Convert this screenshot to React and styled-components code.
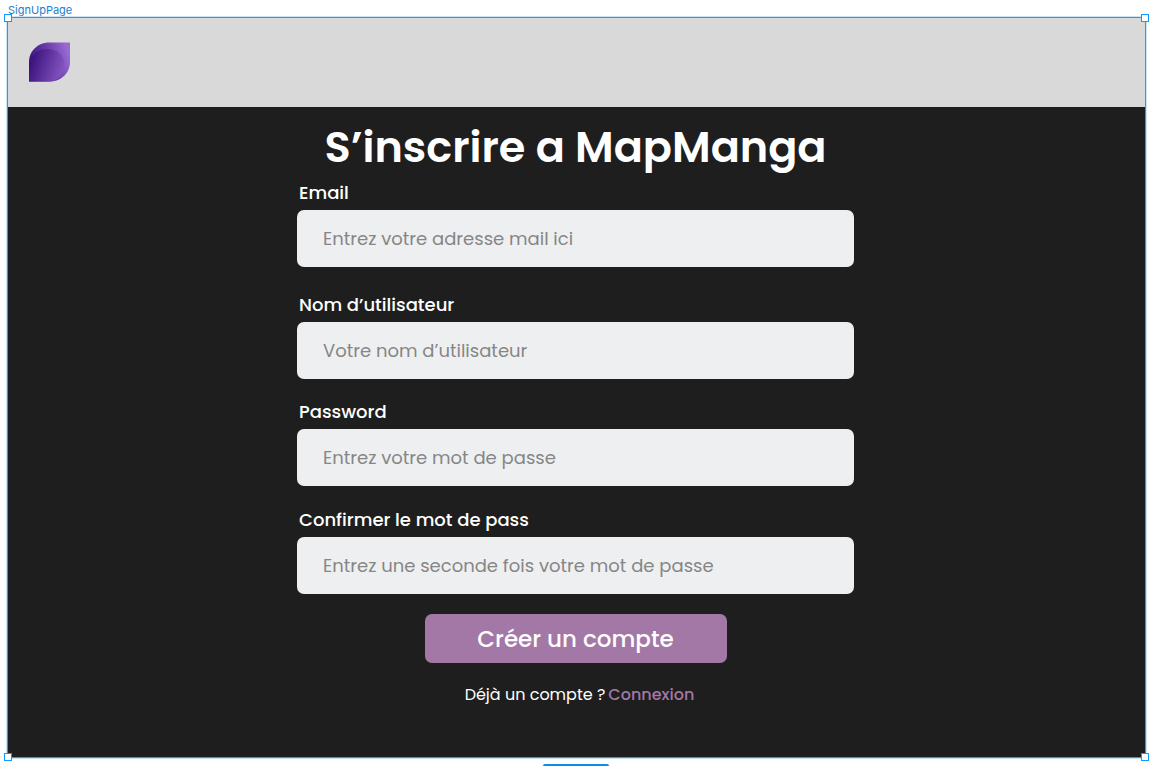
import React from "react";
import styled, { createGlobalStyle } from "styled-components";

const GlobalStyle = createGlobalStyle`
  *, *::before, *::after { box-sizing: border-box; }
  body {
    margin: 0;
    background: #ffffff;
    font-family: Poppins, Inter, "Liberation Sans", sans-serif;
  }
`;

const Canvas = styled.div`
  position: relative;
  min-height: 100vh;
  padding: 3px 5px 8px 7px;
  display: flex;
  flex-direction: column;
  overflow: hidden;
`;

const FrameLabel = styled.div`
  font: 400 11px/14px Inter, "Liberation Sans", sans-serif;
  color: #1c7ed0;
  padding-left: 1px;
`;

const Frame = styled.main`
  position: relative;
  flex: 1;
  border: 1px solid #2f97e4;
  box-shadow: 0 0 0 1px rgba(47, 151, 228, 0.25);
  background: #1e1e1e;
`;

const Handle = styled.span`
  position: absolute;
  width: 8px;
  height: 8px;
  border: 1px solid #0d99ff;
  background: #ffffff;
  ${(p) => p.$v}: -4px;
  ${(p) => p.$h}: -4px;
`;

const SizeTag = styled.span`
  position: absolute;
  left: 50%;
  bottom: 0;
  width: 66px;
  height: 2px;
  margin-left: -33px;
  border-radius: 2px 2px 0 0;
  background: #0d8bea;
`;

const Header = styled.header`
  height: 89px;
  padding: 24px 20px;
  background: #d9d9d9;
`;

const LogoLink = styled.a`
  display: block;
  width: 43px;
`;

const LogoSvg = styled.svg`
  display: block;
`;

const Form = styled.form`
  width: 100%;
  max-width: 559px;
  margin: 0 auto;
  padding: 8px 2px 48px 0;
  display: flex;
  flex-direction: column;
  align-items: center;
`;

const Title = styled.h1`
  margin: 0 0 1px;
  font-size: 43px;
  line-height: 64px;
  font-weight: 600;
  color: #ffffff;
  white-space: nowrap;
`;

const Field = styled.div`
  width: 100%;
  display: flex;
  flex-direction: column;
  margin-bottom: ${(p) => p.$space}px;
`;

const Label = styled.label`
  padding: 0 2px 4px;
  font-size: 18px;
  line-height: 26px;
  font-weight: 500;
  color: #ffffff;
`;

const Input = styled.input`
  width: 100%;
  height: 57px;
  padding: 0 26px;
  border: 0;
  border-radius: 7px;
  background: #eeeff1;
  font: 400 18px/26px Poppins, Inter, "Liberation Sans", sans-serif;
  color: #1e1e1e;
  &::placeholder { color: #868686; opacity: 1; }
`;

const SubmitButton = styled.button`
  width: 302px;
  height: 49px;
  border: 0;
  border-radius: 7px;
  background: #a378a6;
  color: #ffffff;
  font: 500 23px/32px Poppins, Inter, "Liberation Sans", sans-serif;
`;

const Footnote = styled.p`
  margin: 0;
  padding: 20px 0 0 8px;
  display: flex;
  gap: 3px;
  font-size: 16px;
  line-height: 24px;
  color: #ffffff;
`;

const LoginLink = styled.a`
  color: #a378a6;
  font-weight: 500;
  text-decoration: none;
`;

const Logo = () => (
  <LogoSvg width="43" height="41" viewBox="0 0 43 41" aria-hidden="true">
    <defs>
      <linearGradient id="leaf" x1="0" y1="0.7" x2="1" y2="0.4">
        <stop offset="0" stopColor="#350d78" />
        <stop offset="0.5" stopColor="#6535a6" />
        <stop offset="1" stopColor="#986ad2" />
      </linearGradient>
      <linearGradient id="core" x1="0" y1="0.35" x2="1" y2="0.65">
        <stop offset="0" stopColor="#370f7a" />
        <stop offset="1" stopColor="#8656c2" />
      </linearGradient>
    </defs>
    <path d="M1 39.500V20C1 9 10 0.500 21 0.500H42V20C42 31 33 39.500 22 39.500Z" fill="url(#leaf)" />
    <path d="M1 39.500V25C1 14 9 7 19 7C29 7 36 13 36 22C36 32 30 39.500 20 39.500Z" fill="url(#core)" />
  </LogoSvg>
);

const fields = [
  { id: "email", label: "Email", type: "email", hint: "Entrez votre adresse mail ici", space: 25 },
  { id: "username", label: "Nom d’utilisateur", type: "text", hint: "Votre nom d’utilisateur", space: 20 },
  { id: "password", label: "Password", type: "password", hint: "Entrez votre mot de passe", space: 21 },
  { id: "confirm", label: "Confirmer le mot de pass", type: "password", hint: "Entrez une seconde fois votre mot de passe", space: 20 },
];

export default function App() {
  return (
    <>
      <GlobalStyle />
      <Canvas>
        <FrameLabel>SignUpPage</FrameLabel>
        <Frame>
          <Header>
            <LogoLink href="#" aria-label="MapManga">
              <Logo />
            </LogoLink>
          </Header>
          <Form>
            <Title>S’inscrire a MapManga</Title>
            {fields.map((f) => (
              <Field key={f.id} $space={f.space}>
                <Label htmlFor={f.id}>{f.label}</Label>
                <Input id={f.id} type={f.type} placeholder={f.hint} />
              </Field>
            ))}
            <SubmitButton type="button">Créer un compte</SubmitButton>
            <Footnote>
              Déjà un compte ? <LoginLink href="#">Connexion</LoginLink>
            </Footnote>
          </Form>
          <Handle $v="top" $h="left" />
          <Handle $v="top" $h="right" />
          <Handle $v="bottom" $h="left" />
          <Handle $v="bottom" $h="right" />
        </Frame>
        <SizeTag />
      </Canvas>
    </>
  );
}
